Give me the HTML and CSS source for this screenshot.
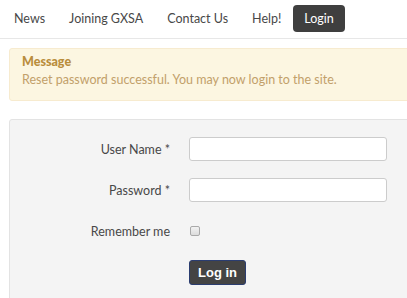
FILE: index.html
```html
<!DOCTYPE html>
<html lang="en">
<head>
  <meta charset="UTF-8">
  <title>Login</title>
  <link rel="stylesheet" href="styles.css">
</head>
<body>
  <nav class="topnav">
    <a href="#" class="nav-link">News</a>
    <a href="#" class="nav-link">Joining GXSA</a>
    <a href="#" class="nav-link">Contact Us</a>
    <a href="#" class="nav-link">Help!</a>
    <a href="#" class="nav-link nav-active">Login</a>
  </nav>

  <div class="content">
    <div class="alert">
      <h4 class="alert-title">Message</h4>
      <p class="alert-text">Reset password successful. You may now login to the site.</p>
    </div>

    <form class="well">
      <div class="form-row">
        <label class="form-label" for="username">User Name *</label>
        <input class="form-input" type="text" id="username">
      </div>
      <div class="form-row">
        <label class="form-label" for="password">Password *</label>
        <input class="form-input" type="password" id="password">
      </div>
      <div class="form-row">
        <label class="form-label" for="remember">Remember me</label>
        <input class="form-check" type="checkbox" id="remember">
      </div>
      <div class="form-row">
        <span class="form-label"></span>
        <button class="btn-login" type="button">Log in</button>
      </div>
    </form>
  </div>
</body>
</html>
```

FILE: styles.css
```css
* {
  box-sizing: border-box;
  margin: 0;
  padding: 0;
}

body {
  font-family: Lato, 'Open Sans', sans-serif;
  font-size: 12.5px;
  color: #484848;
  background: #fff;
  overflow: hidden;
}

.topnav {
  display: flex;
  align-items: center;
  padding: 5px 2px 6px;
  border-bottom: 1px solid #e7e7e7;
}

.nav-link {
  display: block;
  padding: 0 12px;
  height: 27px;
  line-height: 27px;
  color: #484848;
  text-decoration: none;
  border-radius: 4px;
}

.nav-active {
  background: #3f3f3f;
  color: #fff;
  padding: 0 11px;
}

.content {
  padding: 9px 0 0 9px;
  margin-right: -10px;
}

.alert {
  background: #fcf6e1;
  border: 1px solid #f7ebcf;
  border-radius: 3px;
  padding: 6px 12px 0;
  height: 53px;
  color: #c2a06a;
}

.alert-title {
  font-size: 12.5px;
  font-weight: 900;
  color: #b98d3c;
  line-height: 14px;
}

.alert-text {
  margin-top: 2px;
  line-height: 17px;
}

.well {
  margin-top: 18px;
  background: #f4f4f4;
  border: 1px solid #e3e3e3;
  border-radius: 3px;
  padding: 17px 0 20px;
  display: flex;
  flex-direction: column;
  gap: 17px;
}

.form-row {
  display: flex;
  align-items: center;
  min-height: 24px;
}

.form-label {
  width: 160px;
  margin-right: 19px;
  text-align: right;
  color: #484848;
}

.form-input {
  width: 198px;
  height: 24px;
  border: 1px solid #ccc;
  border-radius: 3px;
  background: #fff;
}

.form-check {
  appearance: none;
  width: 10px;
  height: 10px;
  margin: 0 0 0 1px;
  border: 1px solid #a9a9a9;
  border-radius: 2px;
  background: linear-gradient(#f2f2f2, #dcdcdc);
}

.btn-login {
  width: 57px;
  height: 25px;
  background: #444;
  color: #fff;
  border: 1px solid #2b3d70;
  border-radius: 3px;
  font-family: 'Liberation Sans', Arial, sans-serif;
  font-weight: bold;
  font-size: 13px;
}
```
